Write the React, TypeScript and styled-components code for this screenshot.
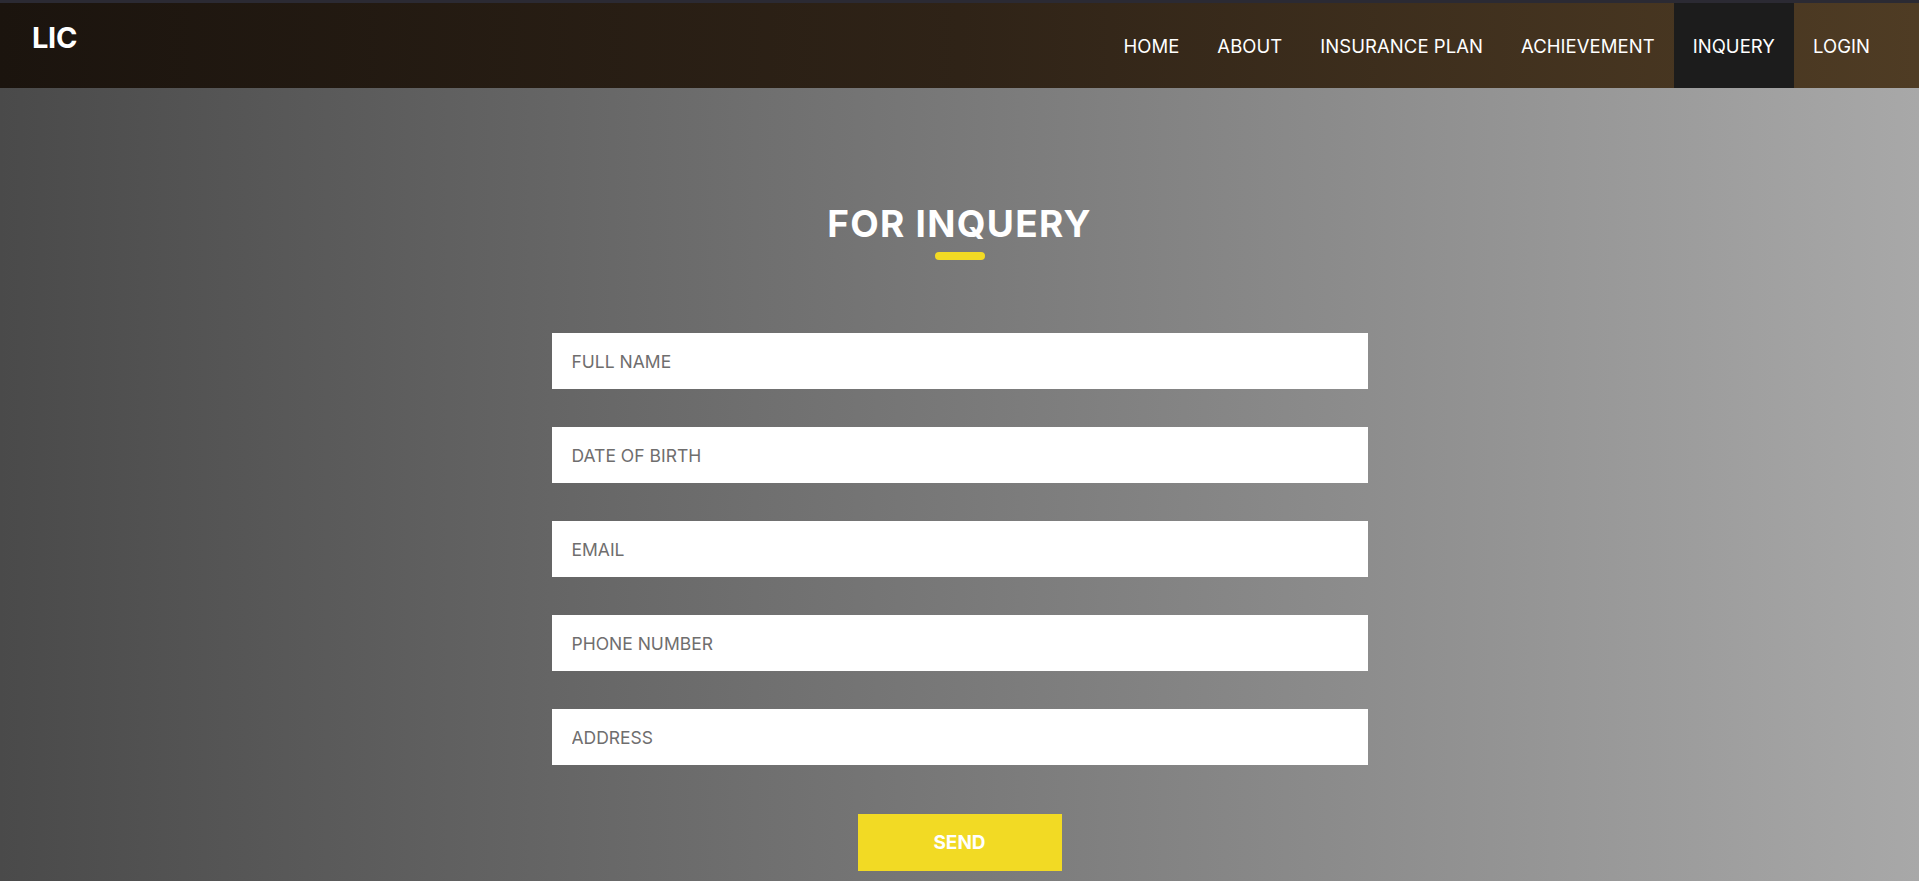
import React from 'react'
import styled, { createGlobalStyle } from 'styled-components'

const GlobalStyle = createGlobalStyle`
  * {
    box-sizing: border-box;
  }

  body {
    margin: 0;
    font-family: Inter, 'Noto Sans', Arial, sans-serif;
    background: #2b2a33;
  }
`

const links = ['HOME', 'ABOUT', 'INSURANCE PLAN', 'ACHIEVEMENT', 'INQUERY', 'LOGIN']
const fields = ['FULL NAME', 'DATE OF BIRTH', 'EMAIL', 'PHONE NUMBER', 'ADDRESS']

const App: React.FC = () => {
  return (
    <Page>
      <GlobalStyle />
      <TopStrip />

      <Header>
        <Logo>LIC</Logo>
        <Nav>
          {links.map(link => (
            <NavLink key={link} href="#" active={link === 'INQUERY'}>
              {link}
            </NavLink>
          ))}
        </Nav>
      </Header>

      <Main>
        <Title>FOR INQUERY</Title>
        <Underline />

        <Form onSubmit={e => e.preventDefault()}>
          {fields.map(field => (
            <Input key={field} type="text" placeholder={field} />
          ))}
          <SendButton type="submit">SEND</SendButton>
        </Form>
      </Main>
    </Page>
  )
}

const Page = styled.div`
  display: flex;
  flex-direction: column;
  min-height: 100vh;
`

const TopStrip = styled.div`
  height: 3px;
  background: #2b2a33;
`

const Header = styled.header`
  display: flex;
  justify-content: space-between;
  align-items: stretch;
  height: 85px;
  padding: 0 30px 0 32px;
  background: linear-gradient(to right, #1b140e 0%, #2f2317 50%, #4f3c24 100%);
`

const Logo = styled.div`
  padding-top: 20px;
  color: #fff;
  font-size: 29px;
  font-weight: 700;
  line-height: 1;
  letter-spacing: -0.3px;
`

const Nav = styled.nav`
  display: flex;
  align-items: stretch;
`

const NavLink = styled.a.withConfig({
  shouldForwardProp: prop => prop !== 'active'
})<{ active?: boolean }>`
  display: flex;
  align-items: center;
  padding: 0 19px;
  color: #fff;
  font-size: 18.5px;
  font-weight: 400;
  letter-spacing: 0.05px;
  text-decoration: none;
  background: ${props => (props.active ? '#1c1c1c' : 'transparent')};
`

const Main = styled.main`
  flex: 1;
  display: flex;
  flex-direction: column;
  align-items: center;
  padding: 117px 0 11px;
  background: linear-gradient(to right, #4a4a4a 0%, #a8a8a8 100%);
`

const Title = styled.h2`
  margin: 0;
  color: #fff;
  font-size: 37px;
  font-weight: 700;
  line-height: 1;
  letter-spacing: 1.3px;
`

const Underline = styled.span`
  display: block;
  width: 50px;
  height: 8px;
  margin-top: 10px;
  border-radius: 4px;
  background: #f2da24;
`

const Form = styled.form`
  display: flex;
  flex-direction: column;
  align-items: center;
  gap: 38px;
  width: 816px;
  margin-top: 73px;
`

const Input = styled.input`
  width: 100%;
  height: 56px;
  padding: 0 20px;
  border: none;
  outline: none;
  background: #fff;
  color: #333;
  font-family: Inter, 'Noto Sans', Arial, sans-serif;
  font-size: 17.5px;

  &::placeholder {
    color: #6f6e6e;
  }
`

const SendButton = styled.button`
  width: 204px;
  height: 57px;
  margin-top: 11px;
  border: none;
  background: #f2da24;
  color: #fff;
  font-family: Inter, 'Noto Sans', Arial, sans-serif;
  font-size: 19px;
  font-weight: 700;
  cursor: pointer;
`

export default App
